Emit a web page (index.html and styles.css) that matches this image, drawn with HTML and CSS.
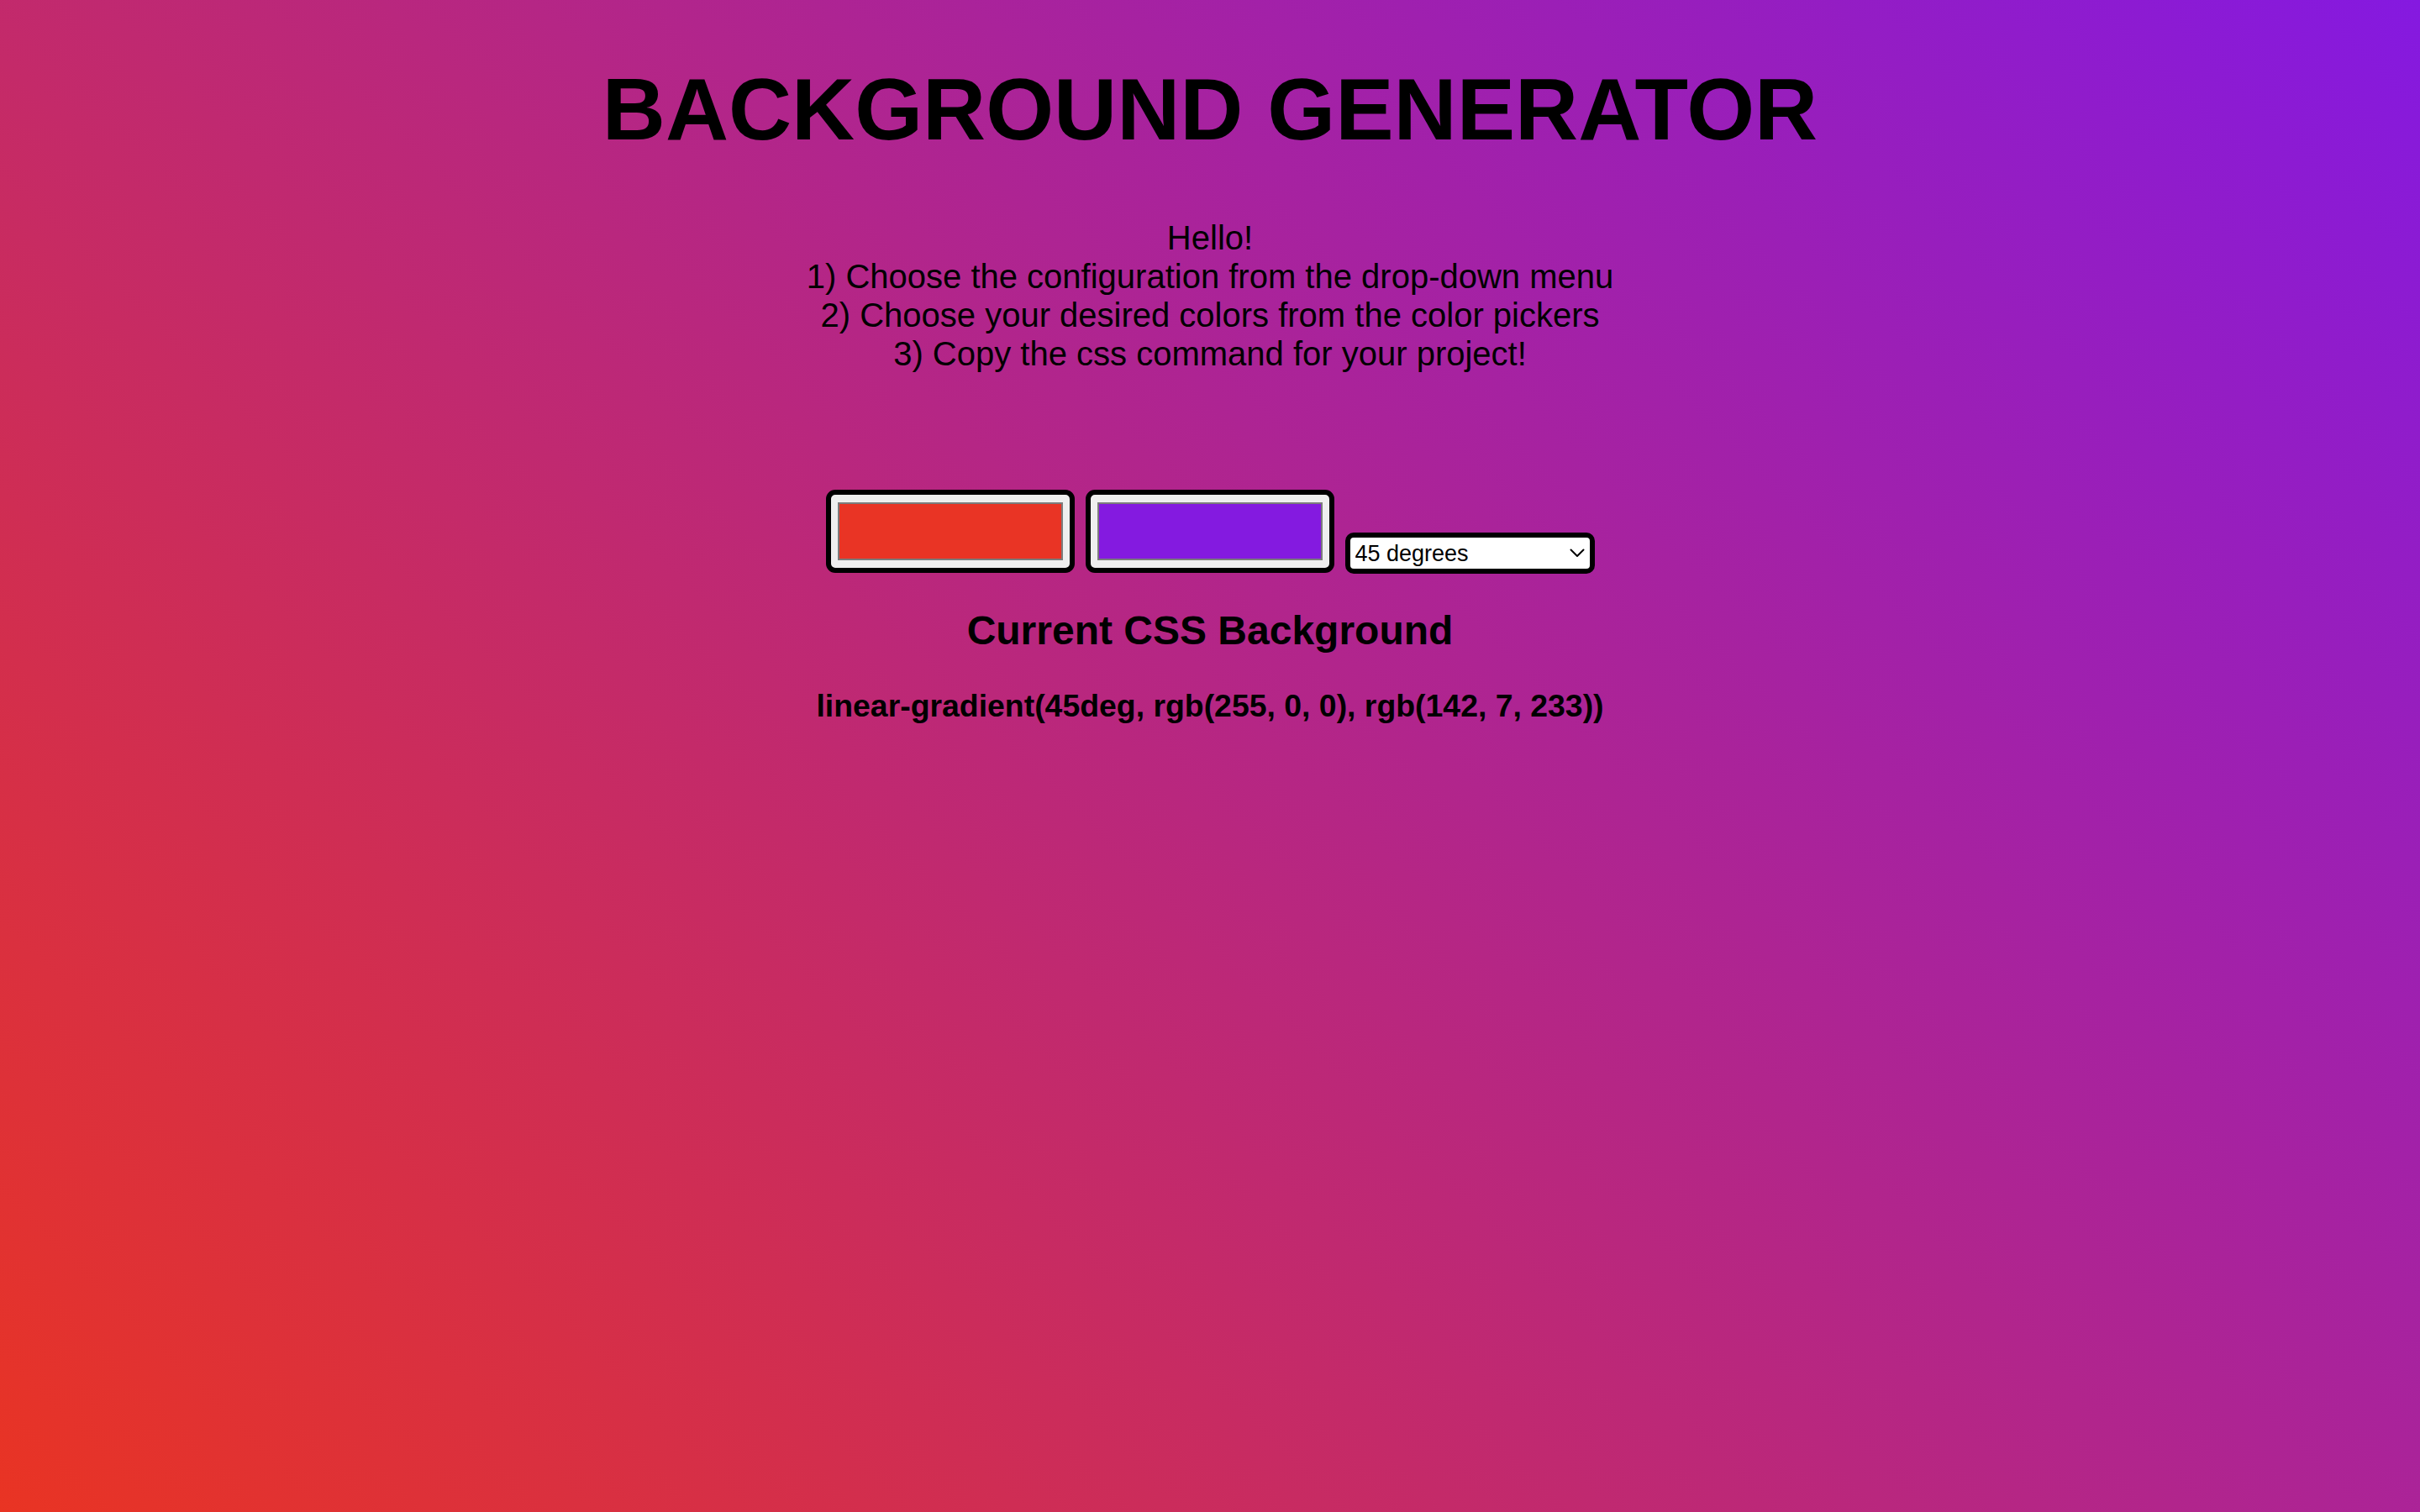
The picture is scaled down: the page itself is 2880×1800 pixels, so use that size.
FILE: index.html
```html
<!DOCTYPE html>
<html lang="en">
<head>
<meta charset="utf-8">
<title>Background Generator</title>
<link rel="stylesheet" href="styles.css">
</head>
<body>
  <h1 class="title">BACKGROUND GENERATOR</h1>
  <p class="intro">Hello!<br>1) Choose the configuration from the drop-down menu<br>2) Choose your desired colors from the color pickers<br>3) Copy the css command for your project!</p>
  <div class="controls">
    <input type="color" class="picker" value="#e93425">
    <input type="color" class="picker" value="#841ae0">
    <div class="select-wrap">
      <select class="direction">
        <option>45 degrees</option>
        <option>90 degrees</option>
        <option>180 degrees</option>
      </select>
      <svg class="chevron" viewBox="0 0 18 11" width="18" height="11"><path d="M1.5 1.5 L9 9 L16.5 1.5" fill="none" stroke="#000" stroke-width="2" stroke-linecap="round" stroke-linejoin="round"/></svg>
    </div>
  </div>
  <h2 class="current-title">Current CSS Background</h2>
  <h3 class="current-value">linear-gradient(45deg, rgb(255, 0, 0), rgb(142, 7, 233))</h3>
</body>
</html>
```
FILE: styles.css
```css
html {
  height: 100%;
}

body {
  margin: 0;
  min-height: 100%;
  background: linear-gradient(45deg, #e93423, #8519e0);
  font-family: "Liberation Sans", Arial, Helvetica, sans-serif;
  color: #000;
  text-align: center;
}

.title {
  margin: 70px 0 0;
  font-size: 104px;
  line-height: 120px;
  font-weight: bold;
}

.intro {
  margin: 70px 0 0;
  font-size: 40px;
  line-height: 46px;
}

.controls {
  margin-top: 139px;
  display: flex;
  justify-content: center;
  align-items: flex-end;
  gap: 13px;
}

.picker {
  -webkit-appearance: none;
  appearance: none;
  box-sizing: border-box;
  width: 296px;
  height: 99px;
  margin: 0;
  padding: 9px 8px;
  border: 6px solid #000;
  border-radius: 11px;
  background: #efefef;
  cursor: pointer;
}

.picker::-webkit-color-swatch-wrapper {
  padding: 0;
}

.picker::-webkit-color-swatch {
  border: 2px solid #7c7c7c;
  border-radius: 0;
}

.select-wrap {
  position: relative;
  width: 297px;
  height: 49px;
  margin-bottom: -1px;
}

.direction {
  -webkit-appearance: none;
  appearance: none;
  box-sizing: border-box;
  width: 100%;
  height: 100%;
  margin: 0;
  padding: 0 0 0 6px;
  border: 6px solid #000;
  border-radius: 10px;
  background: #fff;
  font-family: "Liberation Sans", Arial, sans-serif;
  font-size: 27px;
  color: #000;
}

.chevron {
  position: absolute;
  right: 12px;
  top: 19px;
  pointer-events: none;
}

.current-title {
  margin: 41px 0 0;
  font-size: 48px;
  line-height: 55px;
  font-weight: bold;
}

.current-value {
  margin: 41px 0 0;
  font-size: 37.4px;
  line-height: 43px;
  font-weight: bold;
}
```
